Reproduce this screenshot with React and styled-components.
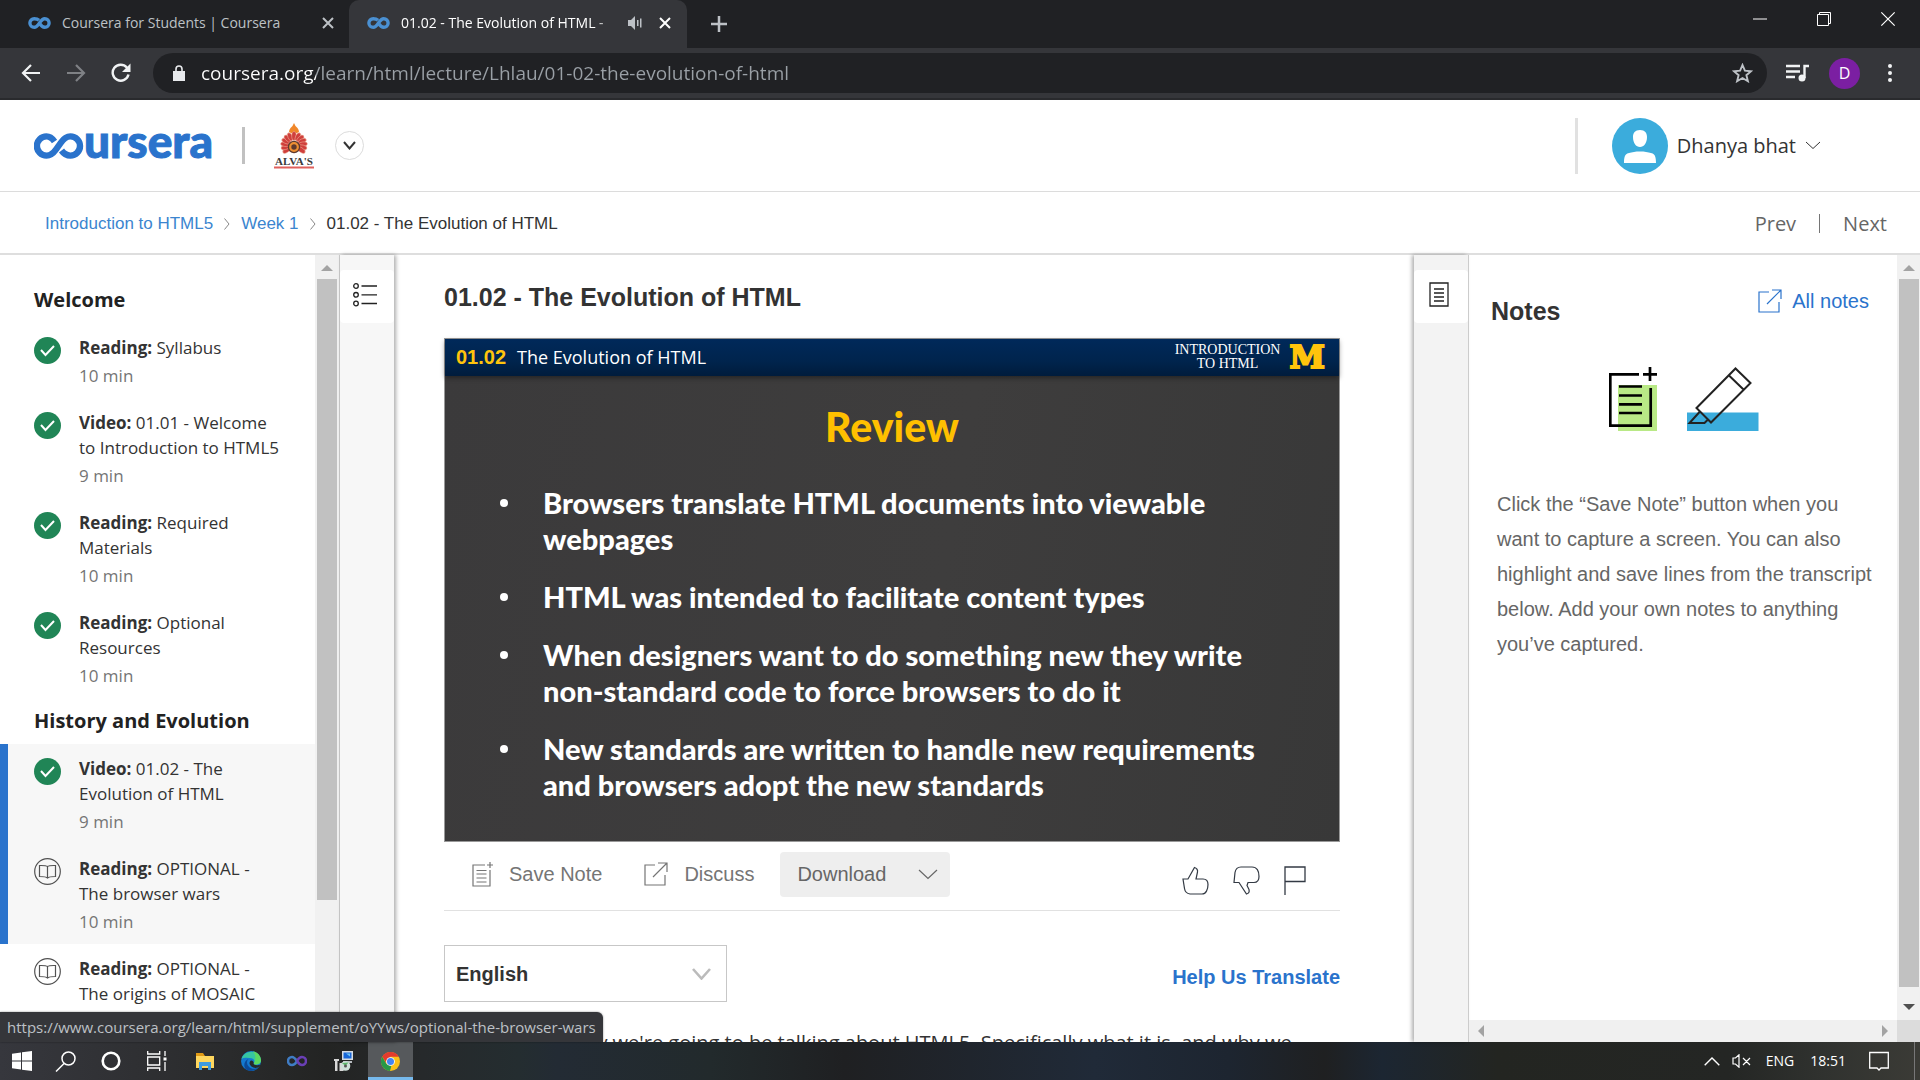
import React from "react";
import styled, { createGlobalStyle, css } from "styled-components";

const ui = '"Open Sans", "Noto Sans", sans-serif';
const arial = '"Liberation Sans", Arial, sans-serif';

const GlobalStyle = createGlobalStyle`
  *, *::before, *::after { box-sizing: border-box; }
  body { margin: 0; background: #fff; font-family: ${ui}; color: #333; }
  button { border: 0; padding: 0; background: none; font: inherit; color: inherit; cursor: pointer; }
  a { text-decoration: none; color: inherit; }
  h1, h2, p, ul, ol { margin: 0; padding: 0; }
  ul, ol { list-style: none; }
  svg { display: block; flex: none; }
`;

const Screen = styled.div`
  display: flex;
  flex-direction: column;
  height: 100vh;
  overflow: hidden;
`;

/* ---------- browser chrome ---------- */

const TabStrip = styled.div`
  display: flex;
  align-items: stretch;
  height: 48px;
  flex: none;
  background: #202124;
  color: #fff;
`;

const Tab = styled.div`
  display: flex;
  align-items: center;
  gap: 11px;
  width: ${(p) => (p.$active ? 338 : 349)}px;
  padding: ${(p) => (p.$active ? "8px 10px 10px 18px" : "8px 9px 10px 28px")};
  font-size: 14px;
  line-height: 20px;
  color: ${(p) => (p.$active ? "#fff" : "#bdc1c6")};
  background: ${(p) => (p.$active ? "#35363a" : "transparent")};
  border-radius: 10px 10px 0 0;
`;

const TabTitle = styled.span`
  flex: 1;
  min-width: 0;
  overflow: hidden;
  white-space: nowrap;
  ${(p) => p.$fade && css`mask-image: linear-gradient(90deg, #000 90%, transparent);`}
`;

const IconButton = styled.button`
  display: flex;
  align-items: center;
  justify-content: center;
  flex: none;
  width: ${(p) => p.$w || 24}px;
  height: ${(p) => p.$h || 24}px;
`;

const NewTab = styled(IconButton)`
  margin: 12px 0 0 20px;
  color: #bdc1c6;
`;

const WindowControls = styled.div`
  display: flex;
  margin-left: auto;
  height: 38px;
`;

const Toolbar = styled.div`
  display: flex;
  align-items: center;
  height: 52px;
  flex: none;
  padding: 0 15px 0 7px;
  background: #35363a;
  border-bottom: 2px solid #292a2d;
  color: #f1f3f4;
`;

const Omnibox = styled.label`
  display: flex;
  align-items: center;
  flex: 1;
  height: 40px;
  margin: 0 12px 0 10px;
  padding: 0 13px 0 20px;
  border-radius: 20px;
  background: #202124;
`;

const Address = styled.input`
  flex: 1;
  min-width: 0;
  margin-left: 16px;
  padding: 0;
  border: 0;
  outline: 0;
  font: 19px/28px ${ui};
  color: transparent;
  background: linear-gradient(90deg, #fff 115px, #9aa0a6 115px);
  background-clip: text;
`;

const ProfileButton = styled.button`
  width: 31px;
  height: 31px;
  margin: 0 15px 0 14px;
  border-radius: 50%;
  background: #7b1fa2;
  color: #fff;
  font-size: 16px;
  line-height: 31px;
`;

/* ---------- site header ---------- */

const SiteHeader = styled.header`
  display: flex;
  align-items: center;
  height: 92px;
  flex: none;
  padding: 0 99px 0 34px;
  border-bottom: 1px solid #dcdcdc;
`;

const Logo = styled.a`
  display: flex;
  align-items: center;
  color: #2a73cc;
`;

const LogoText = styled.span`
  padding-bottom: 10px;
  font: 900 46px/56px Lato, sans-serif;
  -webkit-text-stroke: 1px #2a73cc;
`;

const Rule = styled.span`
  width: ${(p) => p.$w}px;
  height: ${(p) => p.$h}px;
  background: ${(p) => p.$c};
`;

const Partner = styled.div`
  display: flex;
  align-items: center;
  gap: 29px;
  margin-left: 29px;
`;

const PartnerMenu = styled(IconButton)`
  margin-left: 21px;
  border: 1px solid #dcdcdc;
  border-radius: 50%;
`;

const Account = styled.div`
  display: flex;
  align-items: center;
  gap: 34px;
  margin-left: auto;
`;

const AccountButton = styled.button`
  display: flex;
  align-items: center;
  gap: 9px;
  font-size: 20px;
  line-height: 28px;
`;

const SubHeader = styled.div`
  display: flex;
  align-items: center;
  justify-content: space-between;
  height: 63px;
  flex: none;
  padding: 2px 33px 0 45px;
  border-bottom: 2px solid #dedede;
`;

const Crumbs = styled.nav`
  display: flex;
  align-items: center;
  gap: 11px;
  font: 17px/24px ${arial};
  color: #333;
  a { color: #3b85cf; }
`;

const Pager = styled.nav`
  display: flex;
  align-items: center;
  gap: 23px;
  font-size: 20px;
  line-height: 28px;
  color: #666;
`;

/* ---------- workspace ---------- */

const Workspace = styled.div`
  display: flex;
  flex: 1;
  min-height: 0;
  position: relative;
`;

const Sidebar = styled.aside`
  display: flex;
  width: 340px;
  flex: none;
  border-right: 1px solid #ccc;
`;

const Lessons = styled.nav`
  flex: 1;
  min-width: 0;
  padding-top: 22px;
  overflow: hidden;
`;

const SectionTitle = styled.h2`
  padding-left: 34px;
  font-size: 20px;
  line-height: 46px;
  font-weight: 700;
  color: #222;
`;

const LessonLink = styled.a`
  display: flex;
  gap: 18px;
  padding: 12px 34px 10px ${(p) => (p.$marked ? 26 : 34)}px;
  border-left: ${(p) => (p.$marked ? "8px solid #2a73cc" : "0")};
  background: ${(p) => (p.$marked ? "#f7f7f7" : "#fff")};
  font-size: 17px;
  line-height: 25px;
  svg { margin-top: 2px; }
`;

const Kind = styled.strong`
  font-weight: 700;
`;

const Duration = styled.div`
  margin-top: 3px;
  color: #757575;
`;

const VScroll = styled.div`
  display: flex;
  flex-direction: column;
  align-items: center;
  flex: none;
  width: ${(p) => p.$w}px;
  padding: 10px 0;
  background: #f1f1f1;
`;

const Thumb = styled.div`
  width: 20px;
  height: ${(p) => p.$len};
  margin-top: 8px;
  margin-bottom: auto;
  background: #c1c1c1;
`;

const Rail = styled.div`
  width: 54px;
  flex: none;
  padding-top: 15px;
  background: ${(p) => (p.$right ? "#f3f3f3" : "#f7f7f7")};
  box-shadow: ${(p) => (p.$right ? "-2px" : "2px")} 0 4px rgba(0, 0, 0, 0.32);
`;

const RailButton = styled(IconButton)`
  width: 54px;
  height: 53px;
  padding: 0 4px 4px 0;
  border-radius: 4px;
  background: #fff;
`;

const Main = styled.main`
  flex: 1;
  min-width: 0;
  padding: 26px 74px 0 50px;
  overflow: hidden;
`;

const Title = styled.h1`
  font: 700 25px/32px ${arial};
  color: #333;
`;

/* ---------- video slide ---------- */

const Slide = styled.section`
  width: 100%;
  aspect-ratio: 896 / 504;
  margin-top: 25px;
  border: 1px solid #999;
  background: linear-gradient(100deg, #3b3a3b, #3e3d3d 55%, #383838);
  color: #fff;
`;

const SlideBar = styled.div`
  display: flex;
  align-items: center;
  height: 37px;
  padding: 0 14px 2px 11px;
  background: linear-gradient(#00295a, #00244d 60%, #001c3c);
  box-shadow: 0 2px 5px rgba(0, 0, 0, 0.4);
`;

const SlideNumber = styled.span`
  font: 700 20px/28px ${arial};
  color: #ffc40c;
`;

const SlideName = styled.span`
  margin-left: 11px;
  font-size: 18px;
  line-height: 28px;
`;

const SlideCourse = styled.span`
  margin-left: auto;
  width: 116px;
  text-align: center;
  font: 14px/14px "Liberation Serif", serif;
`;

const BlockM = styled.span`
  margin-left: 4px;
  font: 700 32px/36px "DejaVu Serif", serif;
  color: #ffc40c;
  -webkit-text-stroke: 2px #ffc40c;
`;

const SlideTitle = styled.h2`
  margin-top: 24px;
  text-align: center;
  font: 900 41px/54px Lato, sans-serif;
  color: #ffc000;
`;

const Bullets = styled.ul`
  display: flex;
  flex-direction: column;
  gap: 22px;
  margin-top: 31px;
  padding: 0 60px 0 55px;
  font: 900 29px/36px Lato, sans-serif;
`;

const Bullet = styled.li`
  display: flex;
  &::before {
    content: "";
    width: 8px;
    height: 8px;
    margin: 14px 35px 0 0;
    border-radius: 50%;
    background: #fff;
    flex: none;
  }
`;

/* ---------- below video ---------- */

const Actions = styled.div`
  display: flex;
  align-items: center;
  height: 69px;
  padding: 0 34px 4px 28px;
  border-bottom: 1px solid #e1e1e1;
  font: 20px/28px ${arial};
  color: #757575;
`;

const ActionButton = styled.button`
  display: flex;
  align-items: center;
  gap: 16px;
  margin-right: 42px;
`;

const DownloadButton = styled.button`
  display: flex;
  align-items: center;
  justify-content: space-between;
  width: 170px;
  height: 45px;
  margin-left: -16px;
  padding: 0 12px 0 17px;
  border-radius: 4px;
  background: #eee;
  color: #666;
`;

const Feedback = styled.div`
  display: flex;
  gap: 24px;
  margin-left: auto;
  padding-top: 12px;
`;

const TranscriptBar = styled.div`
  display: flex;
  align-items: center;
  justify-content: space-between;
  margin-top: 34px;
`;

const LanguageBox = styled.label`
  display: flex;
  align-items: center;
  width: 283px;
  height: 57px;
  padding-right: 15px;
  border: 1px solid #c7c7c7;
`;

const Language = styled.select`
  flex: 1;
  height: 100%;
  padding: 0 0 0 11px;
  border: 0;
  appearance: none;
  background: none;
  font: 700 20px/28px ${arial};
  color: #333;
`;

const HelpLink = styled.a`
  padding-top: 6px;
  font: 700 20px/28px ${arial};
  color: #2a73cc;
`;

const Transcript = styled.p`
  margin-top: 24px;
  padding-left: 107px;
  font-size: 20px;
  line-height: 34px;
  white-space: nowrap;
  color: #333;
`;

/* ---------- notes ---------- */

const NotesPanel = styled.aside`
  display: flex;
  flex-direction: column;
  width: 429px;
  flex: none;
  border-left: 1px solid #ccc;
  font-family: ${arial};
`;

const NotesBody = styled.div`
  flex: 1;
  padding: 32px 20px 0 22px;
`;

const NotesHead = styled.div`
  display: flex;
  justify-content: space-between;
  padding-right: 8px;
`;

const NotesTitle = styled.h2`
  margin-top: 8px;
  font: 700 25px/32px ${arial};
`;

const AllNotes = styled.a`
  display: flex;
  align-items: center;
  gap: 10px;
  height: 28px;
  font-size: 20px;
  color: #2a73cc;
`;

const NotesArt = styled.div`
  display: flex;
  justify-content: center;
  gap: 30px;
  margin-top: 40px;
`;

const NotesText = styled.p`
  margin: 56px 0 0 6px;
  font-size: 20px;
  line-height: 35px;
  color: #666;
`;

const HScroll = styled.div`
  display: flex;
  align-items: center;
  justify-content: space-between;
  height: 22px;
  padding: 0 9px;
  background: #f0f0f0;
`;

const PageScroll = styled.div`
  display: flex;
  flex-direction: column;
  width: 23px;
  flex: none;
  & > :first-child { flex: 1; }
`;

const Corner = styled.div`
  height: 22px;
  background: #dcdcdc;
`;

const StatusBubble = styled.div`
  position: absolute;
  left: 0;
  bottom: 0;
  height: 30px;
  padding: 0 7px;
  border-radius: 0 6px 0 0;
  background: #35363a;
  box-shadow: 0 0 2px rgba(0, 0, 0, 0.5);
  color: #bdc1c6;
  font-size: 15px;
  line-height: 30px;
`;

/* ---------- taskbar ---------- */

const Taskbar = styled.footer`
  display: flex;
  align-items: center;
  height: 38px;
  flex: none;
  background: linear-gradient(90deg, #36373d 0, #2a2b2c 12%, #232423 17%, #26292b 22%, #242d30 27%, #232b34 29%, #222a2c 37%, #1f2022 44%, #202a38 57%, #1d2530 64%, #1f2021 69%, #1c2632 72%, #232521 78%, #242624 90%, #30322f 95%, #3b3b36 100%);
  color: #fff;
`;

const TaskButton = styled(IconButton)`
  width: ${(p) => p.$w || 45}px;
  height: 38px;
  background: ${(p) => (p.$active ? "#56595c" : "transparent")};
  box-shadow: ${(p) => (p.$active ? "inset 0 -3px #76b9ed" : "none")};
`;

const Tray = styled.div`
  display: flex;
  align-items: center;
  margin-left: auto;
  padding-right: 5px;
  font-size: 14px;
`;

const TrayText = styled.span`
  margin-left: ${(p) => p.$gap}px;
  line-height: 20px;
`;

/* ---------- drawings ---------- */

const Favicon = () => (
  <svg width="23" height="12" viewBox="0 0 23 12" fill="none" stroke="#4a90d2" strokeWidth="3.4">
    <path d="M11 3.2C9.6 1.9 8 1.7 6.2 1.7a4.3 4.3 0 0 0 0 8.6c5 0 5.400-8.600 10.600-8.600a4.300 4.300 0 0 1 0 8.600c-3 0-4.300-2.400-5.400-4.300" />
  </svg>
);
const Cross = ({ size = 12, w = 2, c = "currentColor" }) => (
  <svg width={size} height={size} viewBox="0 0 12 12" stroke={c} strokeWidth={w}>
    <path d="M1 1l10 10M11 1L1 11" />
  </svg>
);
const Chevron = ({ w, h, sw = 1, c = "#333" }) => (
  <svg width={w} height={h} viewBox={`0 0 ${w} ${h}`} fill="none" stroke={c} strokeWidth={sw}>
    <path d={`M1 1L${w / 2} ${h - 1.5}L${w - 1} 1`} />
  </svg>
);
const Check = () => (
  <svg width="27" height="27" viewBox="0 0 27 27">
    <circle cx="13.500" cy="13.500" r="13.500" fill="#208556" />
    <path d="M7 13l4.500 5L20 9" fill="none" stroke="#fff" strokeWidth="2" />
  </svg>
);
const Book = () => (
  <svg width="27" height="27" viewBox="0 0 27 27" fill="none" stroke="#525252" strokeWidth="1.200">
    <circle cx="13.500" cy="13.500" r="12.800" />
    <path d="M13.500 20V8.500C12 7.300 9 7.500 5.500 7.500v11c3.500 0 6.500 0 8 1.500 1.500-1.500 4.500-1.500 8-1.500v-11c-3.500 0-6.500-.2-8 1" />
  </svg>
);
const External = ({ c }) => (
  <svg width="24" height="24" viewBox="0 0 24 24" fill="none" stroke={c} strokeWidth="1.200">
    <path d="M11 3H1v20h20V13M14 1h9v9M23 1L9 15" />
  </svg>
);
const Triangle = ({ dir, c = "#a3a3a3" }) => {
  const d = { up: "M0 6L6 0l6 6z", down: "M0 0h12L6 6z", left: "M6 0v12L0 6z", right: "M0 0l6 6-6 6z" }[dir];
  const tall = dir === "left" || dir === "right";
  return <svg width={tall ? 6 : 12} height={tall ? 12 : 6} fill={c}><path d={d} /></svg>;
};

const petals = [-125, -105, -85, -65, -45, -25, 0, 25, 45, 65, 85, 105, 125];
const PartnerCrest = () => (
  <svg width="40" height="46" viewBox="0 0 40 46">
    <path d="M20 0q1 3 3.500 5 1.500 2 1.500 4-5 3-10 0 0-2 1.500-4Q19 3 20 0z" fill="#f0872a" />
    {petals.map((a) => (
      <ellipse key={a} cx="20" cy="13" rx="2.300" ry="4.400" fill="#cf3f3c" stroke="#f3b9a0" strokeWidth=".5" transform={`rotate(${a} 20 22)`} />
    ))}
    <circle cx="20" cy="24" r="6.200" fill="#5f3a2e" />
    <circle cx="20" cy="24" r="3.800" fill="none" stroke="#ee8f32" strokeWidth="2.200" />
    <text x="20" y="42" textAnchor="middle" fontFamily="Liberation Serif, serif" fontWeight="700" fontSize="11" fill="#3a3a3a">ALVA'S</text>
    <path d="M0 44.500h40" stroke="#e0605c" strokeWidth="2" />
  </svg>
);

/* ---------- data ---------- */

const welcome = [
  { kind: "Reading:", name: "Syllabus", time: "10 min", done: true },
  { kind: "Video:", name: "01.01 - Welcome to Introduction to HTML5", time: "9 min", done: true },
  { kind: "Reading:", name: "Required Materials", time: "10 min", done: true },
  { kind: "Reading:", name: "Optional Resources", time: "10 min", done: true },
];
const history = [
  { kind: "Video:", name: "01.02 - The Evolution of HTML", time: "9 min", done: true, marked: true },
  { kind: "Reading:", name: "OPTIONAL - The browser wars", time: "10 min", marked: true },
  { kind: "Reading:", name: "OPTIONAL - The origins of MOSAIC", time: "10 min" },
];
const points = [
  "Browsers translate HTML documents into viewable webpages",
  "HTML was intended to facilitate content types",
  "When designers want to do something new they write non-standard code to force browsers to do it",
  "New standards are written to handle new requirements and browsers adopt the new standards",
];

const LessonList = ({ items }) => (
  <ul>
    {items.map((it) => (
      <li key={it.name}>
        <LessonLink href="#" $marked={it.marked}>
          {it.done ? <Check /> : <Book />}
          <div>
            <Kind>{it.kind}</Kind> {it.name}
            <Duration>{it.time}</Duration>
          </div>
        </LessonLink>
      </li>
    ))}
  </ul>
);

const Browser = () => (
  <>
    <TabStrip>
      <Tab>
        <Favicon />
        <TabTitle>Coursera for Students | Coursera</TabTitle>
        <IconButton aria-label="Close tab"><Cross /></IconButton>
      </Tab>
      <Tab $active>
        <Favicon />
        <TabTitle $fade>01.02 - The Evolution of HTML - </TabTitle>
        <svg width="14" height="14" viewBox="0 0 14 14" fill="#bdc1c6"><path d="M0 4h3l4-4v14l-4-4H0zM9 4h1.500v6H9zM12 2.500h1.500v9H12z" /></svg>
        <IconButton aria-label="Close tab"><Cross /></IconButton>
      </Tab>
      <NewTab aria-label="New tab">
        <svg width="18" height="18" stroke="currentColor" strokeWidth="2.500"><path d="M9 1v16M1 9h16" /></svg>
      </NewTab>
      <WindowControls>
        <IconButton $w={64} $h={38} aria-label="Minimize"><svg width="14" height="2"><path d="M0 1h14" stroke="#fff" /></svg></IconButton>
        <IconButton $w={64} $h={38} aria-label="Restore">
          <svg width="15" height="15" fill="none" stroke="#fff"><path d="M.5 2.500h11v11H.5zM2.500 2.500v-2h11v11h-2" /></svg>
        </IconButton>
        <IconButton $w={64} $h={38} aria-label="Close"><Cross size={16} w={0.9} c="#fff" /></IconButton>
      </WindowControls>
    </TabStrip>
    <Toolbar>
      <IconButton $w={46} aria-label="Back">
        <svg width="19" height="18" viewBox="0 0 19 18" fill="none" stroke="#f1f3f4" strokeWidth="2.200"><path d="M19 9H2M10 1L2 9l8 8" /></svg>
      </IconButton>
      <IconButton $w={46} aria-label="Forward">
        <svg width="19" height="18" viewBox="0 0 19 18" fill="none" stroke="#7f8185" strokeWidth="2.200"><path d="M0 9h17M9 1l8 8-8 8" /></svg>
      </IconButton>
      <IconButton $w={44} aria-label="Reload">
        <svg width="20" height="20" viewBox="0 0 20 20" fill="none" stroke="#f1f3f4" strokeWidth="2.400"><path d="M17.500 11.500A8 8 0 1 1 15.800 4.500L18 7" /><path d="M19.500.5v8.500H11z" fill="#f1f3f4" stroke="none" /></svg>
      </IconButton>
      <Omnibox>
        <svg width="12" height="16" viewBox="0 0 12 16"><path d="M0 6h12v10H0z" fill="#e8eaed" /><path d="M3 6V4a3 3 0 0 1 6 0v2" fill="none" stroke="#e8eaed" strokeWidth="1.600" /></svg>
        <Address aria-label="Address" defaultValue="coursera.org/learn/html/lecture/Lhlau/01-02-the-evolution-of-html" />
        <IconButton aria-label="Bookmark">
          <svg width="21" height="20" viewBox="0 0 21 20" fill="none" stroke="#bdc1c6" strokeWidth="1.900"><path d="M10.500 2l2.400 5.700 6.200.5-4.700 4 1.500 6-5.400-3.200-5.400 3.200 1.500-6-4.700-4 6.200-.5z" /></svg>
        </IconButton>
      </Omnibox>
      <IconButton $w={36} aria-label="Media controls">
        <svg width="23" height="18" viewBox="0 0 23 18" fill="none" stroke="#f1f3f4" strokeWidth="2.400"><path d="M0 2h14M0 7.500h14M0 13h9M23 2h-4.500v12" /><circle cx="16" cy="14" r="3.500" fill="#f1f3f4" stroke="none" /></svg>
      </IconButton>
      <ProfileButton aria-label="Profile">D</ProfileButton>
      <IconButton $w={30} aria-label="Menu">
        <svg width="4" height="18" fill="#f1f3f4"><circle cx="2" cy="2" r="2" /><circle cx="2" cy="9" r="2" /><circle cx="2" cy="16" r="2" /></svg>
      </IconButton>
    </Toolbar>
  </>
);

const Tasks = () => (
  <Taskbar>
    <TaskButton aria-label="Start" $w={43}><svg width="20" height="20" viewBox="0 0 20 20" fill="#fff"><path d="M0 2.800L9 1.500v8H0zM10 1.300L20 0v9.500H10zM0 10.500h9v8L0 17.200zM10 10.500h10V20l-10-1.300z" /></svg></TaskButton>
    <TaskButton aria-label="Search"><svg width="21" height="21" fill="none" stroke="#fff" strokeWidth="1.500"><circle cx="13.500" cy="7.500" r="6.500" /><path d="M9 12.500L1 20.500" /></svg></TaskButton>
    <TaskButton aria-label="Cortana"><svg width="20" height="20" fill="none" stroke="#fff" strokeWidth="2.600"><circle cx="10" cy="10" r="8.300" /></svg></TaskButton>
    <TaskButton aria-label="Task view" $w={48}><svg width="20" height="20" fill="none" stroke="#fff" strokeWidth="1.300"><path d="M.7 0v3h12V0M.7 20v-3h12v3M.7 6h12v8H.7zM18 0v5M18 11v9" /><path d="M16.500 6.500h3v3h-3z" fill="#fff" stroke="none" /></svg></TaskButton>
    <TaskButton aria-label="File Explorer" $w={47}><svg width="18" height="17" viewBox="0 0 18 17"><path d="M0 0h7l2 3H0z" fill="#e19b16" /><path d="M0 3h18v12H0z" fill="#ffd75e" /><path d="M3 9h12v8h-3v-4H6v4H3z" fill="#3f9be0" /></svg></TaskButton>
    <TaskButton aria-label="Edge" $w={46}>
      <svg width="20" height="20" viewBox="0 0 20 20">
        <circle cx="10" cy="10" r="10" fill="#1479cf" />
        <path d="M.5 8A10 10 0 0 1 20 9c.2 4-4 5.500-7.500 4 2-2 .8-5.200-2-5.700C7 6.500 2 6.500.5 8z" fill="#37c6a0" />
        <path d="M12 .3A10 10 0 0 1 20 9c.2 4-4 5.500-7.500 4C15 9 15 4 12 .3z" fill="#5cd860" />
        <path d="M6 11c0 5 5 8.500 11 6A10 10 0 0 1 5 18.600C2 15 3 10 7.500 8 6.500 9 6 10 6 11z" fill="#0c4a97" />
        <path d="M10 9.500a2.600 2.600 0 0 1 2.500 3.500c1.500 1.400 5 1.500 7 .5-1 2-2 3-3.500 3.300-4 .7-7-1.800-7.500-4.300 0-1.500.5-2.500 1.500-3z" fill="#26292b" />
      </svg>
    </TaskButton>
    <TaskButton aria-label="Visual Studio"><svg width="20" height="12" fill="none" strokeWidth="2.600"><path d="M10 6C7.500 2.500 6.500 2 5 2a4 4 0 0 0 0 8c3 0 4-2 5-4" stroke="#3f7cc4" /><path d="M10 6c1-2 2-4 5-4a4 4 0 0 1 0 8c-2 0-3-1-5-4" stroke="#6a3fb5" /></svg></TaskButton>
    <TaskButton aria-label="Installer" $w={49}>
      <svg width="19" height="20" viewBox="0 0 19 20">
        <path d="M8 0h11v9H8z" fill="#d5dbe2" /><path d="M9.500 1.500h8v6h-8z" fill="#1766d8" /><path d="M12 2.500h4v3z" fill="#6cc3f5" />
        <path d="M9 10h9v2H9z" fill="#b8bdc2" /><path d="M0 8h5v2H3.500v10H1V10H0zM5.500 12h4v8h-4z" fill="#d8d8d8" />
        <circle cx="11.500" cy="15" r="4.800" fill="#cfe0da" /><path d="M8 12l3.500 3 3-3.500z" fill="#5cb56b" /><circle cx="11.500" cy="15" r="1.500" fill="#555" />
      </svg>
    </TaskButton>
    <TaskButton $active aria-label="Chrome">
      <svg width="19" height="19" viewBox="0 0 20 20">
        <circle cx="10" cy="10" r="10" fill="#fbc116" />
        <path d="M1.300 5A10 10 0 0 1 18.700 5H10L6 12z" fill="#e33b2e" />
        <path d="M1.300 5l4.500 7.500 5 2.300L9.500 20A10 10 0 0 1 1.300 5z" fill="#279847" />
        <circle cx="10" cy="10" r="4.600" fill="#fff" /><circle cx="10" cy="10" r="3.700" fill="#4285f4" />
      </svg>
    </TaskButton>
    <Tray>
      <IconButton $w={16} aria-label="Show hidden icons"><svg width="16" height="9" fill="none" stroke="#fff" strokeWidth="1.400"><path d="M.7 8.300L8 1l7.300 7.300" /></svg></IconButton>
      <TrayText $gap={12}><svg width="19" height="14" fill="none" stroke="#fff" strokeWidth="1.200"><path d="M1 4h2.500L7 .8v12.400L3.500 10H1zM11 4l7 7M18 4l-7 7" /></svg></TrayText>
      <TrayText $gap={15}>ENG</TrayText>
      <TrayText $gap={16}>18:51</TrayText>
      <TrayText $gap={23}><svg width="20" height="20" fill="none" stroke="#fff" strokeWidth="1.300"><path d="M.7 1.500h18.600v15.500H12l-2 2-2-2H.7z" /></svg></TrayText>
      <TrayText $gap={25}><Rule as="div" $w={1} $h={38} $c="#777" /></TrayText>
    </Tray>
  </Taskbar>
);

export default function App() {
  return (
    <Screen>
      <GlobalStyle />
      <Browser />
      <SiteHeader>
        <Logo href="#" aria-label="Coursera">
          <svg width="50" height="26" viewBox="0 0 50 26" fill="none" stroke="currentColor" strokeWidth="6.400">
            <path d="M20.500 8.500C18 5 15.500 3.400 12.500 3.400a9.600 9.600 0 0 0 0 19.200c4.500 0 7-2.600 9.500-6.100l5-7C29.500 5.800 32 3.400 36.400 3.400a9.600 9.600 0 0 1 0 19.200c-4 0-6.500-1.800-8.900-5.100" />
          </svg>
          <LogoText>ursera</LogoText>
        </Logo>
        <Partner>
          <Rule $w={3} $h={37} $c="#c1c1c1" />
          <PartnerCrest />
        </Partner>
        <PartnerMenu $w={29} $h={29} aria-label="Switch program"><Chevron w={13} h={9} sw={2} /></PartnerMenu>
        <Account>
          <Rule $w={3} $h={56} $c="#e1e1e1" />
          <AccountButton>
            <svg width="56" height="56" viewBox="0 0 56 56">
              <circle cx="28" cy="28" r="28" fill="#3bacdc" />
              <path d="M28 12c5 0 7 3 7 7 0 6-3 10-7 10s-7-4-7-10c0-4 2-7 7-7zM12 45c0-9 2-10 10-11 3-.6 9-.6 12 0 8 1 10 2 10 11z" fill="#fff" />
            </svg>
            Dhanya bhat
            <Chevron w={16} h={9} />
          </AccountButton>
        </Account>
      </SiteHeader>
      <SubHeader>
        <Crumbs>
          <a href="#">Introduction to HTML5</a>
          <svg width="6" height="12" fill="none" stroke="#888"><path d="M.5.5L5 6 .5 11.500" /></svg>
          <a href="#">Week 1</a>
          <svg width="6" height="12" fill="none" stroke="#888"><path d="M.5.5L5 6 .5 11.500" /></svg>
          <span>01.02 - The Evolution of HTML</span>
        </Crumbs>
        <Pager>
          <a href="#">Prev</a>
          <Rule $w={1} $h={19} $c="#757575" />
          <a href="#">Next</a>
        </Pager>
      </SubHeader>
      <Workspace>
        <Sidebar>
          <Lessons>
            <SectionTitle>Welcome</SectionTitle>
            <LessonList items={welcome} />
            <SectionTitle>History and Evolution</SectionTitle>
            <LessonList items={history} />
          </Lessons>
          <VScroll $w={24}>
            <Triangle dir="up" />
            <Thumb $len="81%" />
          </VScroll>
        </Sidebar>
        <Rail>
          <RailButton aria-label="Lesson list">
            <svg width="24" height="24" fill="none" stroke="#222" strokeWidth="1.300">
              <circle cx="3" cy="3" r="2.300" /><circle cx="3" cy="11.800" r="2.300" /><circle cx="3" cy="20.500" r="2.300" />
              <path d="M8.500 3H24M8.500 11.800H24M8.500 20.500H24" />
            </svg>
          </RailButton>
        </Rail>
        <Main>
          <Title>01.02 - The Evolution of HTML</Title>
          <Slide>
            <SlideBar>
              <SlideNumber>01.02</SlideNumber>
              <SlideName>The Evolution of HTML</SlideName>
              <SlideCourse>INTRODUCTION TO HTML</SlideCourse>
              <BlockM>M</BlockM>
            </SlideBar>
            <SlideTitle>Review</SlideTitle>
            <Bullets>
              {points.map((t) => <Bullet key={t}>{t}</Bullet>)}
            </Bullets>
          </Slide>
          <Actions>
            <ActionButton>
              <svg width="21" height="25" viewBox="0 0 21 25" fill="none" stroke="#757575" strokeWidth="1.200"><path d="M13 3H1v21h17V8M4.500 8.500h10M4.500 12h10M4.500 16h10M4.500 20h10M18 0v6M15 3h6" /></svg>
              Save Note
            </ActionButton>
            <ActionButton>
              <External c="#757575" />
              Discuss
            </ActionButton>
            <DownloadButton>
              Download
              <Chevron w={20} h={11} sw={1.2} c="#666" />
            </DownloadButton>
            <Feedback>
              <IconButton $w={27} $h={29} aria-label="Like"><svg width="27" height="29" fill="none" stroke="#333a44" strokeWidth="1.200"><path d="M1 13h5l6.500-11.500c2 .5 3.500 2.500 3 4.500l-1.500 7h7c3.500 0 5 2.500 5 5.500 0 5-2 9.500-6 9.500H8c-3-.5-5-2-5.500-5.500z" /></svg></IconButton>
              <IconButton $w={27} $h={29} aria-label="Dislike"><svg width="27" height="29" fill="none" stroke="#333a44" strokeWidth="1.200"><path d="M1 16.500h5L13.500 28c2-.5 3-2.500 2.500-4.500l-2-4 1-3h6c4 0 5-3 5-6C26 5 24 1 19 1H8C4 1 2.500 3.500 2 6.500z" /></svg></IconButton>
              <IconButton $w={22} $h={29} aria-label="Report"><svg width="22" height="29" fill="none" stroke="#333a44" strokeWidth="1.300"><path d="M1 29V1h20v14.500H1" /></svg></IconButton>
            </Feedback>
          </Actions>
          <TranscriptBar>
            <LanguageBox>
              <Language aria-label="Transcript language"><option>English</option></Language>
              <Chevron w={19} h={12} sw={2.6} c="#bbb" />
            </LanguageBox>
            <HelpLink href="#">Help Us Translate</HelpLink>
          </TranscriptBar>
          <Transcript>Today we're going to be talking about HTML5. Specifically what it is, and why we</Transcript>
        </Main>
        <Rail $right>
          <RailButton aria-label="Notes">
            <svg width="20" height="25" fill="none" stroke="#222" strokeWidth="1.300"><path d="M1 1h18v23H1zM5 7h10M5 11h10M5 15h10M5 19h10" /></svg>
          </RailButton>
        </Rail>
        <NotesPanel>
          <NotesBody>
            <NotesHead>
              <NotesTitle>Notes</NotesTitle>
              <AllNotes href="#"><External c="#2a73cc" />All notes</AllNotes>
            </NotesHead>
            <NotesArt>
              <svg width="48" height="64" fill="none" stroke="#000" strokeWidth="2.700">
                <path d="M9 18h39v46H9z" fill="#b9e986" stroke="none" />
                <path d="M30 7.300H1.300v51.400h40.400V21M10 19.500h23M10 28.500h23M10 37.300h23M10 46h23M34 7.300h14M41 0v14" />
              </svg>
              <svg width="72" height="64" fill="none" stroke="#222" strokeWidth="2">
                <path d="M0 45.500h71.500V64H0z" fill="#3bacdc" stroke="none" />
                <path d="M9.500 41L48.500 1.500 63.500 16 24 55.500zM42 8.500l14.500 14M12.500 45L2.500 56h15l3.500-3.500" />
              </svg>
            </NotesArt>
            <NotesText>
              Click the “Save Note” button when you want to capture a screen. You can also highlight and save lines from the transcript below. Add your own notes to anything you’ve captured.
            </NotesText>
          </NotesBody>
          <HScroll><Triangle dir="left" /><Triangle dir="right" /></HScroll>
        </NotesPanel>
        <PageScroll>
          <VScroll $w={23}>
            <Triangle dir="up" />
            <Thumb $len="95%" />
            <Triangle dir="down" c="#505050" />
          </VScroll>
          <Corner />
        </PageScroll>
        <StatusBubble>https://www.coursera.org/learn/html/supplement/oYYws/optional-the-browser-wars</StatusBubble>
      </Workspace>
      <Tasks />
    </Screen>
  );
}
